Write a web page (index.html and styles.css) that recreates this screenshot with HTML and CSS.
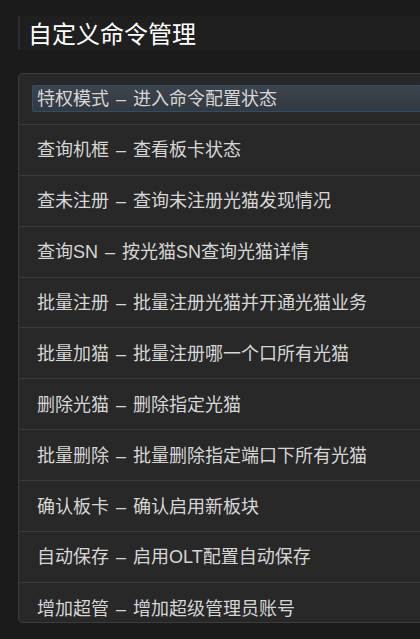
FILE: index.html
```html
<!DOCTYPE html>
<html lang="zh-CN">
<head>
    <meta charset="UTF-8">
    <meta name="viewport" content="width=device-width, initial-scale=1.0">
    <title>自定义命令管理</title>
    <link rel="stylesheet" href="styles.css">
</head>
<body>
    <!-- 标题 -->
    <div class="page-header">
        <h1>自定义命令管理</h1>
    </div>

    <!-- 命令列表 -->
    <div class="cmd-list">
        <div class="cmd-item selected"><span class="cmd-text">特权模式 – 进入命令配置状态</span></div>
        <div class="cmd-item"><span class="cmd-text">查询机框 – 查看板卡状态</span></div>
        <div class="cmd-item"><span class="cmd-text">查未注册 – 查询未注册光猫发现情况</span></div>
        <div class="cmd-item"><span class="cmd-text">查询SN – 按光猫SN查询光猫详情</span></div>
        <div class="cmd-item"><span class="cmd-text">批量注册 – 批量注册光猫并开通光猫业务</span></div>
        <div class="cmd-item"><span class="cmd-text">批量加猫 – 批量注册哪一个口所有光猫</span></div>
        <div class="cmd-item"><span class="cmd-text">删除光猫 – 删除指定光猫</span></div>
        <div class="cmd-item"><span class="cmd-text">批量删除 – 批量删除指定端口下所有光猫</span></div>
        <div class="cmd-item"><span class="cmd-text">确认板卡 – 确认启用新板块</span></div>
        <div class="cmd-item"><span class="cmd-text">自动保存 – 启用OLT配置自动保存</span></div>
        <div class="cmd-item last"><span class="cmd-text">增加超管 – 增加超级管理员账号</span></div>
    </div>
</body>
</html>
```

FILE: styles.css
```css
* {
    margin: 0;
    padding: 0;
    box-sizing: border-box;
}

body {
    background: #1b1b1b;
    color: #d6d6d6;
    font-family: 'Liberation Sans', 'Noto Sans CJK SC', sans-serif;
    overflow: hidden;
    width: 420px;
    height: 639px;
    padding: 16px 0 0 18px;
}

/* 标题 */
.page-header {
    height: 34px;
    background: #1f1f1f;
    border-left: 2px solid #2c2c2c;
    padding-left: 8px;
    display: flex;
    align-items: center;
    width: 402px;
}

.page-header h1 {
    font-family: 'Noto Sans CJK SC', sans-serif;
    font-size: 24px;
    font-weight: 400;
    color: #ffffff;
    line-height: 1;
}

/* 列表 */
.cmd-list {
    margin-top: 23px;
    width: 410px;
    height: 550px;
    background: #282828;
    border: 1px solid #3c3c3c;
    border-right: none;
    border-radius: 5px 0 0 5px;
    overflow: hidden;
}

.cmd-item {
    height: 50.9px;
    border-bottom: 1px solid #3a3a3a;
    display: flex;
    align-items: center;
    padding-left: 13px;
    padding-top: 2px;
}

.cmd-item.last {
    height: 39px;
    border-bottom: none;
    align-items: flex-end;
    padding-top: 0;
    padding-bottom: 0;
}

.cmd-text {
    font-size: 18px;
    line-height: 23px;
    word-spacing: 2px;
    padding: 0 4px;
    border: 1px solid transparent;
    border-right: none;
    white-space: nowrap;
    flex: 1;
}

.cmd-item.selected {
    padding-top: 0;
}

.cmd-item.selected .cmd-text {
    background: linear-gradient(#3d444d, #323941);
    border-color: #2f4e6a;
    border-radius: 2px 0 0 2px;
    padding-top: 2px;
}
```
